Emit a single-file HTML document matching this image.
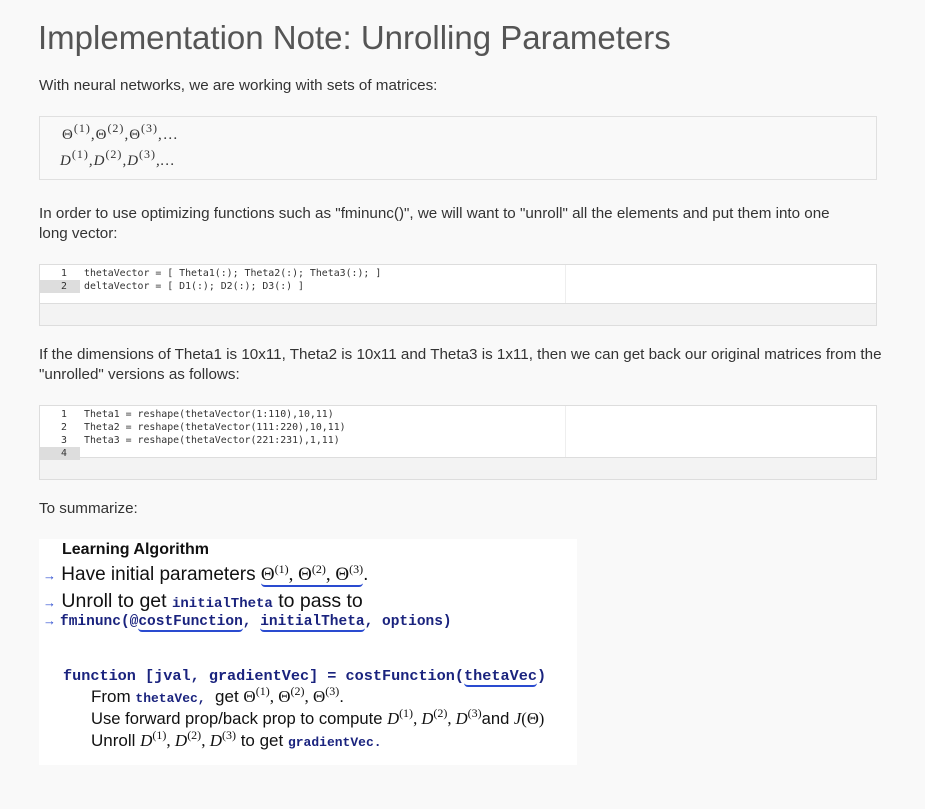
<!DOCTYPE html>
<html><head><meta charset="utf-8"><style>
body{margin:0;background:#f9f9f9;width:925px;height:809px;overflow:hidden;font-family:"Liberation Sans",sans-serif;color:#333;position:relative}
.a{position:absolute;white-space:nowrap}
p{margin:0;font-size:15.2px;line-height:20px}
.math{border:1px solid #e0e0e0;background:#f9f9f9}
.code{border:1px solid #ddd;background:#f3f3f3}
.cw{position:absolute;left:0;top:0;right:0;background:#fff;border-bottom:1px solid #ddd}
.ln{font-family:"DejaVu Sans Mono",monospace;font-size:9.9px;line-height:13px;color:#333}
.g{position:absolute;left:0;width:40px;text-align:right}
.g div{padding-right:13px}
.sel{background:#ddd}
.tx{position:absolute;left:44px}
.ser{font-family:"Liberation Serif",serif}
.mono{font-family:"Liberation Mono",monospace;font-weight:bold;color:#1a237e}
.u{border-bottom:2px solid #2a4bd0;border-radius:0 0 4px 4px}
.ar{color:#2a4bd0}
sup{vertical-align:7px;line-height:0}
</style></head><body>
<div class="a" style="left:38px;top:19px;font-size:33px;font-weight:normal;color:#555">Implementation Note: Unrolling Parameters</div>
<p class="a" style="left:39px;top:76px">With neural networks, we are working with sets of matrices:</p>
<div class="a math" style="left:39px;top:116px;width:836px;height:62px">
 <div class="a ser" style="left:22px;top:10px;font-size:15px;letter-spacing:1px">Θ<sup style="font-size:12px">(1)</sup>,Θ<sup style="font-size:12px">(2)</sup>,Θ<sup style="font-size:12px">(3)</sup>,…</div>
 <div class="a ser" style="left:20px;top:36px;font-size:15px;font-style:italic;letter-spacing:1px">D<sup style="font-size:12px;font-style:normal">(1)</sup>,D<sup style="font-size:12px;font-style:normal">(2)</sup>,D<sup style="font-size:12px;font-style:normal">(3)</sup>,…</div>
</div>
<p class="a" style="left:39px;top:204px">In order to use optimizing functions such as "fminunc()", we will want to "unroll" all the elements and put them into one<br>long vector:</p>
<div class="a code" style="left:39px;top:264px;width:836px;height:60px">
 <div class="cw" style="height:38px">
  <div class="g ln" style="top:2px"><div>1</div><div class="sel">2</div></div>
  <div class="tx ln" style="top:2px">thetaVector = [ Theta1(:); Theta2(:); Theta3(:); ]<br>deltaVector = [ D1(:); D2(:); D3(:) ]</div>
  <div style="position:absolute;left:525px;top:0;bottom:0;border-left:1px solid #eee"></div>
 </div>
</div>
<p class="a" style="left:39px;top:345px">If the dimensions of Theta1 is 10x11, Theta2 is 10x11 and Theta3 is 1x11, then we can get back our original matrices from the<br>"unrolled" versions as follows:</p>
<div class="a code" style="left:39px;top:405px;width:836px;height:73px">
 <div class="cw" style="height:51px">
  <div class="g ln" style="top:2px"><div>1</div><div>2</div><div>3</div><div class="sel">4</div></div>
  <div class="tx ln" style="top:2px">Theta1 = reshape(thetaVector(1:110),10,11)<br>Theta2 = reshape(thetaVector(111:220),10,11)<br>Theta3 = reshape(thetaVector(221:231),1,11)</div>
  <div style="position:absolute;left:525px;top:0;bottom:0;border-left:1px solid #eee"></div>
 </div>
</div>
<p class="a" style="left:39px;top:499px">To summarize:</p>
<div class="a" style="left:39px;top:539px;width:538px;height:226px;background:#fff;color:#111">
 <div class="a" style="left:23px;top:2px;font-size:16px;font-weight:bold">Learning Algorithm</div>
 <div class="a" style="left:4px;top:25px;font-size:19px"><span class="ar" style="font-size:13px">→</span> Have initial parameters <span class="ser u">Θ<sup style="font-size:12px">(1)</sup>, Θ<sup style="font-size:12px">(2)</sup>, Θ<sup style="font-size:12px">(3)</sup></span>.</div>
 <div class="a" style="left:4px;top:51px;font-size:19.5px"><span class="ar" style="font-size:13px">→</span> Unroll to get <span class="mono" style="font-size:14px">initialTheta</span> to pass to</div>
 <div class="a" style="left:4px;top:74px;font-size:14.5px"><span class="ar" style="font-size:13px">→</span> <span class="mono">fminunc(@<span class="u">costFunction</span>, <span class="u">initialTheta</span>, options)</span></div>
 <div class="a mono" style="left:24px;top:128px;font-size:15.2px">function [jval, gradientVec] = costFunction(<span class="u">thetaVec</span>)</div>
 <div class="a" style="left:52px;top:148px;font-size:17px">From <span class="mono" style="font-size:13px">thetaVec,</span>&nbsp; get <span class="ser">Θ<sup style="font-size:12px">(1)</sup>, Θ<sup style="font-size:12px">(2)</sup>, Θ<sup style="font-size:12px">(3)</sup></span>.</div>
 <div class="a" style="left:52px;top:170px;font-size:16.6px">Use forward prop/back prop to compute <span class="ser"><i>D</i><sup style="font-size:12px">(1)</sup>, <i>D</i><sup style="font-size:12px">(2)</sup>, <i>D</i><sup style="font-size:12px">(3)</sup></span>and <span class="ser"><i>J</i>(Θ)</span></div>
 <div class="a" style="left:52px;top:192px;font-size:17px">Unroll <span class="ser"><i>D</i><sup style="font-size:12px">(1)</sup>, <i>D</i><sup style="font-size:12px">(2)</sup>, <i>D</i><sup style="font-size:12px">(3)</sup></span> to get <span class="mono" style="font-size:13px">gradientVec.</span></div>
</div>
</body></html>
